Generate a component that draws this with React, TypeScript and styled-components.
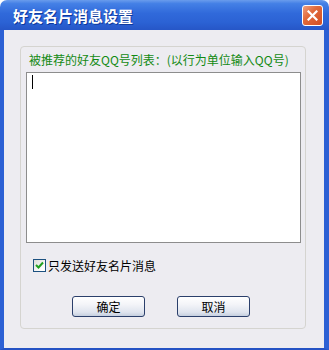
import React, { useState } from "react";
import styled, { createGlobalStyle } from "styled-components";

const GlobalStyle = createGlobalStyle`
  html, body {
    margin: 0;
    padding: 0;
    background: #ffffff;
  }
  body {
    font-family: "Noto Sans CJK SC", "Liberation Sans", sans-serif;
  }
`;

const Window = styled.div`
  width: 329px;
  height: 350px;
  display: flex;
  flex-direction: column;
  box-sizing: border-box;
`;

const TitleBar = styled.div`
  height: 30px;
  flex-shrink: 0;
  display: flex;
  align-items: center;
  justify-content: space-between;
  padding: 0 6px 0 13px;
  box-sizing: border-box;
  border-radius: 7px 7px 0 0;
  background: linear-gradient(
    to bottom,
    #6a9cec 0%,
    #4480e6 12%,
    #3069da 45%,
    #2b62d4 75%,
    #2656c7 100%
  );
`;

const Title = styled.span`
  color: #ffffff;
  font-size: 15px;
  font-weight: 700;
  text-shadow: 1px 1px 0 #0f3a9c;
  line-height: 1;
`;

const CloseButton = styled.button`
  width: 21px;
  height: 21px;
  padding: 0;
  border: 1px solid #ffffff;
  border-radius: 3px;
  display: flex;
  align-items: center;
  justify-content: center;
  background: linear-gradient(135deg, #f0a080 0%, #e06a3c 40%, #d34e22 100%);
  box-sizing: border-box;
  cursor: pointer;
`;

const Body = styled.div`
  flex: 1;
  display: flex;
  flex-direction: column;
  background: #edecf1;
  border-left: 4px solid #2c60d4;
  border-right: 5px solid #2c60d4;
  border-bottom: 2px solid #2452c4;
  padding: 16px 18px 19px 16px;
  box-sizing: border-box;
`;

const GroupBox = styled.div`
  flex: 1;
  display: flex;
  flex-direction: column;
  border: 1px solid #d5d4d0;
  border-radius: 4px;
  padding: 5px 4px 0 5px;
  box-sizing: border-box;
`;

const Label = styled.div`
  color: #138a13;
  font-size: 12px;
  line-height: 15px;
  padding-left: 3px;
  margin-bottom: 5px;
  white-space: nowrap;
`;

const InputWrap = styled.div`
  position: relative;
  width: 275px;
  height: 171px;
`;

const ListInput = styled.textarea`
  width: 100%;
  height: 100%;
  display: block;
  box-sizing: border-box;
  border: 1px solid #8d8d8d;
  background: #ffffff;
  resize: none;
  outline: none;
  padding: 2px 5px;
  font-family: "Noto Sans CJK SC", "Liberation Sans", sans-serif;
  font-size: 12px;
  caret-color: transparent;
`;

const Caret = styled.span`
  position: absolute;
  left: 6px;
  top: 3px;
  width: 1px;
  height: 14px;
  background: #000000;
  pointer-events: none;
`;

const CheckRow = styled.label`
  display: flex;
  align-items: center;
  gap: 2px;
  margin: 14px 0 0 7px;
  font-size: 12px;
  color: #000000;
  cursor: pointer;
`;

const CheckBox = styled.span<{ $checked: boolean }>`
  width: 13px;
  height: 13px;
  box-sizing: border-box;
  border: 1px solid #1c5180;
  background: linear-gradient(135deg, #dcdcd7 0%, #ffffff 80%);
  display: flex;
  align-items: center;
  justify-content: center;
`;

const ButtonRow = styled.div`
  display: flex;
  gap: 32px;
  margin: 22px 0 0 46px;
`;

const DialogButton = styled.button`
  width: 73px;
  height: 21px;
  box-sizing: border-box;
  border: 1px solid #2b3f6b;
  border-radius: 3px;
  background: linear-gradient(to bottom, #ffffff 0%, #f3f4f8 40%, #dfe4ee 80%, #c6cfdf 100%);
  font-family: "Noto Sans CJK SC", "Liberation Sans", sans-serif;
  font-size: 12px;
  color: #000000;
  padding: 0;
  line-height: 19px;
  cursor: pointer;
`;

export default function App() {
  const [onlyCard, setOnlyCard] = useState(true);
  const [list, setList] = useState("");

  return (
    <>
      <GlobalStyle />
      <Window>
        <TitleBar>
          <Title>好友名片消息设置</Title>
          <CloseButton aria-label="close">
            <svg width="11" height="11" viewBox="0 0 11 11">
              <path d="M1.5 1.5 L9.5 9.5 M9.5 1.5 L1.5 9.5" stroke="#ffffff" strokeWidth="2.2" strokeLinecap="square" />
            </svg>
          </CloseButton>
        </TitleBar>
        <Body>
          <GroupBox>
            <Label>被推荐的好友QQ号列表：(以行为单位输入QQ号)</Label>
            <InputWrap>
              <ListInput value={list} onChange={(e) => setList(e.target.value)} />
              {list === "" && <Caret />}
            </InputWrap>
            <CheckRow onClick={() => setOnlyCard(!onlyCard)}>
              <CheckBox $checked={onlyCard}>
                {onlyCard && (
                  <svg width="9" height="9" viewBox="0 0 9 9">
                    <path d="M1 4 L3.5 6.5 L8 1.5" stroke="#21a121" strokeWidth="2" fill="none" />
                  </svg>
                )}
              </CheckBox>
              只发送好友名片消息
            </CheckRow>
            <ButtonRow>
              <DialogButton>确定</DialogButton>
              <DialogButton>取消</DialogButton>
            </ButtonRow>
          </GroupBox>
        </Body>
      </Window>
    </>
  );
}
